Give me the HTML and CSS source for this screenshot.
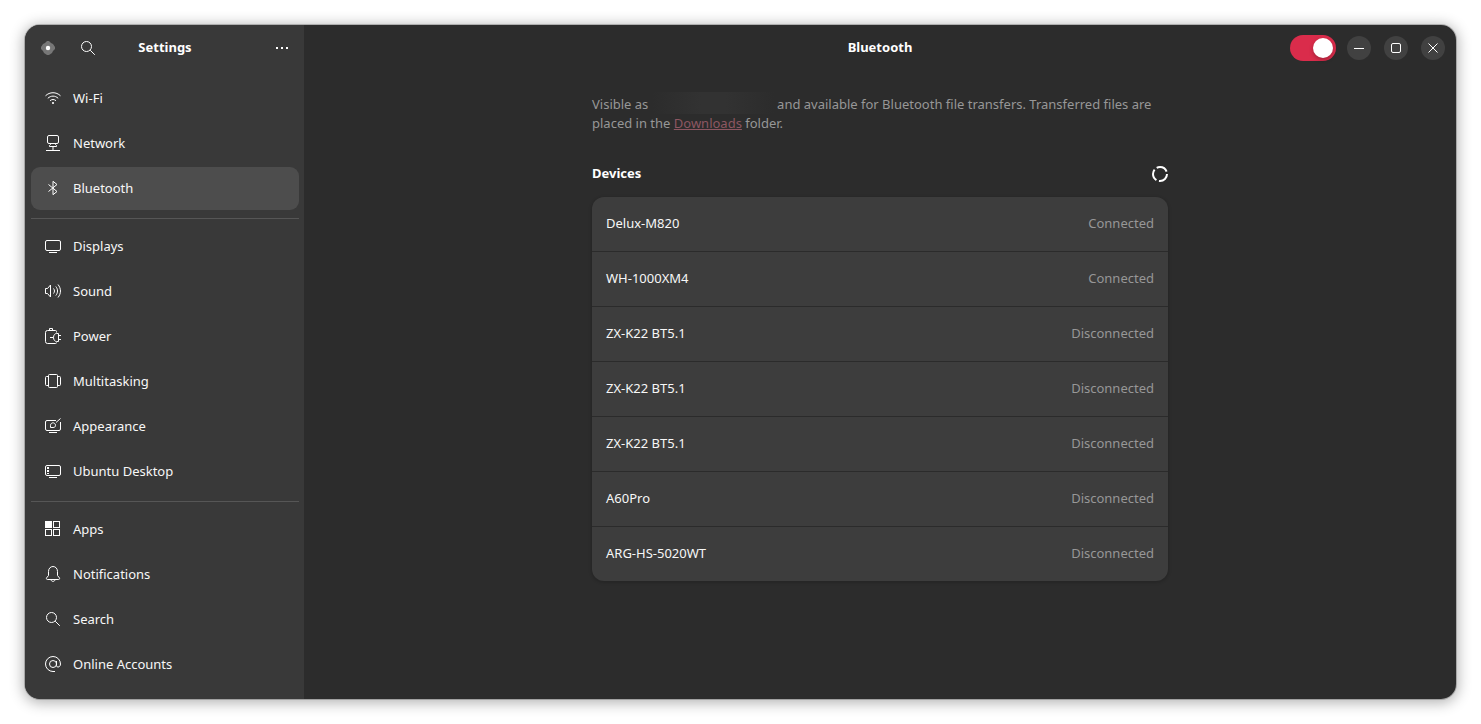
FILE: index.html
```html
<!DOCTYPE html>
<html lang="en">
<head>
  <meta charset="utf-8">
  <title>Settings - Bluetooth</title>
  <link rel="stylesheet" href="styles.css">
</head>
<body>
  <div class="window">
    <aside class="sidebar">
      <header class="sidebar-header">
        <div class="header-start">
          <svg class="icon" viewBox="0 0 16 16"><path d="M7 1h2l2 2 2 1 2 3v2l-2 2-1 2-3 2H7l-3-2-1-2-2-2V7l2-3 2-1z" fill="#777" stroke="none"/><circle cx="8" cy="8" r="2.2" fill="#fff" stroke="none"/></svg>
          <button class="icon-button" type="button" aria-label="Search settings">
            <svg class="icon" viewBox="0 0 16 16"><circle cx="6.5" cy="6.5" r="5"/><path d="M10.2 10.2l4.6 4.6"/></svg>
          </button>
        </div>
        <h1>Settings</h1>
        <div class="header-end">
          <button class="icon-button" type="button" aria-label="Menu">
            <svg class="icon" viewBox="0 0 16 16"><path d="M2 7h2v2H2zM7 7h2v2H7zM12 7h2v2h-2z" fill="#fff" stroke="none"/></svg>
          </button>
        </div>
      </header>

      <nav class="nav">
        <a class="nav-item" href="#wifi">
          <svg class="icon" viewBox="0 0 16 16"><path d="M.5 5.800C4.800 1.700 11.200 1.700 15.500 5.800M2.800 8.300C5.900 5.400 10.100 5.400 13.200 8.300M5 10.700C6.800 9.100 9.200 9.100 11 10.700"/><circle cx="8" cy="13" r="1.100" fill="#fff" stroke="none"/></svg>
          <span>Wi-Fi</span>
        </a>
        <a class="nav-item" href="#network">
          <svg class="icon" viewBox="0 0 16 16"><rect x="2.5" y=".5" width="11" height="8" rx="1.5"/><path d="M5.5 8.5v1l-1 1v1h7v-1l-1-1v-1M8 11.5v4M1 15.500h14"/></svg>
          <span>Network</span>
        </a>
        <a class="nav-item active" href="#bluetooth">
          <svg class="icon" viewBox="0 0 16 16"><path d="M3.500 4.500l8.500 7-4 3.200V1.300l4 3.200-8.500 7"/></svg>
          <span>Bluetooth</span>
        </a>
        <hr>
        <a class="nav-item" href="#displays">
          <svg class="icon" viewBox="0 0 16 16"><rect x=".5" y="2.5" width="15" height="10" rx="1.5"/><path d="M4 14.500h8"/></svg>
          <span>Displays</span>
        </a>
        <a class="nav-item" href="#sound">
          <svg class="icon" viewBox="0 0 16 16"><path d="M.5 5.500h2l3-3.500v12l-3-3.500h-2zM8.500 5.500c1.300 1.500 1.300 3.500 0 5M10.800 3.500c2.300 2.800 2.300 6.200 0 9M13 1.500c3.300 4 3.300 9 0 13"/></svg>
          <span>Sound</span>
        </a>
        <a class="nav-item" href="#power">
          <svg class="icon" viewBox="0 0 16 16"><path d="M11.500 4.500v-1a1 1 0 0 0-1-1h-8a2 2 0 0 0-2 2v9a2 2 0 0 0 2 2h8a1 1 0 0 0 1-1M4.500 2.500v-2h3v2M5 9.500h3.500M13.500 5.500h-2c-1.500 0-3 1.500-3 4s1.500 4 3 4h2zM13.500 7.500H16M13.500 11.500H16"/></svg>
          <span>Power</span>
        </a>
        <a class="nav-item" href="#multitasking">
          <svg class="icon" viewBox="0 0 16 16"><rect x="3.5" y="1.5" width="9" height="13" rx="1"/><path d="M3.500 3.500h-2a1 1 0 0 0-1 1v7a1 1 0 0 0 1 1h2M12.500 3.500h2a1 1 0 0 1 1 1v7a1 1 0 0 1-1 1h-2"/></svg>
          <span>Multitasking</span>
        </a>
        <a class="nav-item" href="#appearance">
          <svg class="icon" viewBox="0 0 16 16"><path d="M11 2.500H2A1.500 1.500 0 0 0 .5 4v7A1.500 1.500 0 0 0 2 12.500h12a1.500 1.500 0 0 0 1.500-1.500V4M4 14.500h8M15.500.5l-4.500 4M5.500 9.500V7.300C5.500 5.500 7 4.800 8 4.800s2.500.7 2.500 2.500-1.200 2.200-2.500 2.200z"/></svg>
          <span>Appearance</span>
        </a>
        <a class="nav-item" href="#desktop">
          <svg class="icon" viewBox="0 0 16 16"><rect x=".5" y="2.5" width="15" height="10" rx="1.5"/><path d="M4 14.500h8"/><path d="M2 4h2v2H2zM2 7h2v2H2zM2 10h2v1H2z" fill="#fff" stroke="none"/></svg>
          <span>Ubuntu Desktop</span>
        </a>
        <hr>
        <a class="nav-item" href="#apps">
          <svg class="icon" viewBox="0 0 16 16"><rect x=".5" y=".5" width="6" height="6" fill="#fff"/><rect x="8.5" y=".5" width="6" height="6"/><rect x=".5" y="8.5" width="6" height="6"/><rect x="8.5" y="8.5" width="6" height="6"/></svg>
          <span>Apps</span>
        </a>
        <a class="nav-item" href="#notifications">
          <svg class="icon" viewBox="0 0 16 16"><path d="M3.500 5.500c0-3 2-5 4.500-5s4.500 2 4.500 5v4l2 2.500c.3.700 0 1.500-.8 1.500H2.300c-.8 0-1.100-.8-.8-1.500l2-2.500zM6 13.500c0 2.500 4 2.500 4 0"/></svg>
          <span>Notifications</span>
        </a>
        <a class="nav-item" href="#search">
          <svg class="icon" viewBox="0 0 16 16"><circle cx="6.5" cy="6.5" r="5"/><path d="M10.200 10.200l4.600 4.600"/></svg>
          <span>Search</span>
        </a>
        <a class="nav-item" href="#accounts">
          <svg class="icon" viewBox="0 0 16 16"><circle cx="8" cy="8" r="3.5"/><path d="M11.500 5v4.500c0 2.500 4 2 4-1.500A7.500 7.500 0 1 0 8 15.500h2"/></svg>
          <span>Online Accounts</span>
        </a>
      </nav>
    </aside>

    <main class="content">
      <header class="content-header">
        <h2>Bluetooth</h2>
        <div class="window-controls">
          <input class="switch" type="checkbox" role="switch" aria-label="Bluetooth" checked>
          <button class="round-button" type="button" aria-label="Minimize">
            <svg class="icon" viewBox="0 0 16 16"><path d="M3 8.500h10"/></svg>
          </button>
          <button class="round-button" type="button" aria-label="Maximize">
            <svg class="icon" viewBox="0 0 16 16"><rect x="3.5" y="3.5" width="9" height="9" rx="1.5"/></svg>
          </button>
          <button class="round-button" type="button" aria-label="Close">
            <svg class="icon" viewBox="0 0 16 16"><path d="M3.500 3.500l9 9M12.500 3.500l-9 9"/></svg>
          </button>
        </div>
      </header>

      <div class="page">
        <p class="description">Visible as <span class="device-name"></span> and available for Bluetooth file transfers. Transferred files are placed in the <a href="#downloads">Downloads</a> folder.</p>

        <div class="section-title">
          <h3>Devices</h3>
          <svg class="icon" viewBox="0 0 16 16"><circle class="spinner" cx="8" cy="8" r="7"/></svg>
        </div>

        <ul class="devices">
          <li><button type="button"><span>Delux-M820</span><span class="status">Connected</span></button></li>
          <li><button type="button"><span>WH-1000XM4</span><span class="status">Connected</span></button></li>
          <li><button type="button"><span>ZX-K22 BT5.1</span><span class="status">Disconnected</span></button></li>
          <li><button type="button"><span>ZX-K22 BT5.1</span><span class="status">Disconnected</span></button></li>
          <li><button type="button"><span>ZX-K22 BT5.1</span><span class="status">Disconnected</span></button></li>
          <li><button type="button"><span>A60Pro</span><span class="status">Disconnected</span></button></li>
          <li><button type="button"><span>ARG-HS-5020WT</span><span class="status">Disconnected</span></button></li>
        </ul>
      </div>
    </main>
  </div>
</body>
</html>
```
FILE: styles.css
```css
* {
  box-sizing: border-box;
}

body {
  margin: 0;
  padding: 25px;
  min-height: 100vh;
  display: flex;
  background-color: #ffffff;
  color: #f7f7f7;
  font-family: "Noto Sans", sans-serif;
  font-size: 13px;
  line-height: 19px;
}

button {
  border: none;
  padding: 0;
  background: none;
  color: inherit;
  font: inherit;
  cursor: pointer;
}

h1,
h2,
h3 {
  margin: 0;
  color: #ffffff;
  font-size: 13px;
  font-weight: bold;
}

.window {
  flex: 1;
  display: flex;
  background-color: #2c2c2c;
  border-radius: 15px;
  overflow: hidden;
  box-shadow: 0 0 0 1px rgba(0, 0, 0, 0.2), 0 2px 14px 2px rgba(0, 0, 0, 0.3);
}

.icon {
  display: block;
  flex: none;
  width: 16px;
  height: 16px;
  fill: none;
  stroke: #ffffff;
  stroke-width: 1;
}

/* Sidebar */
.sidebar {
  flex: none;
  width: 279px;
  background-color: #393939;
}

.sidebar-header {
  display: grid;
  grid-template-columns: 1fr auto 1fr;
  align-items: center;
  height: 45px;
  padding: 0 14px 0 15px;
}

.header-start {
  display: flex;
  align-items: center;
  gap: 24px;
}

.header-end {
  display: flex;
  justify-content: flex-end;
}

.nav {
  display: flex;
  flex-direction: column;
  gap: 2px;
  padding: 7px 5px 6px 6px;
}

.nav-item {
  display: flex;
  gap: 12px;
  padding: 13px 14px;
  border-radius: 9px;
  color: inherit;
  line-height: 17px;
  text-decoration: none;
}

.nav-item.active {
  background-color: #4d4d4d;
}

.nav hr {
  width: 100%;
  height: 1px;
  margin: 6px 0 4px;
  border: none;
  background-color: #565656;
}

/* Content */
.content {
  flex: 1;
}

.content-header {
  display: grid;
  grid-template-columns: 1fr auto 1fr;
  align-items: center;
  height: 45px;
  padding: 0 11px;
}

.content-header h2 {
  grid-column: 2;
}

.window-controls {
  display: flex;
  justify-content: flex-end;
  align-items: center;
  gap: 13px;
}

.switch {
  appearance: none;
  display: flex;
  width: 46px;
  height: 26px;
  margin: 0 -2px 0 0;
  padding: 3px;
  border-radius: 13px;
  background-color: #5a5a5a;
  cursor: pointer;
}

.switch::before {
  content: "";
  width: 20px;
  height: 20px;
  border-radius: 50%;
  background-color: #ffffff;
  box-shadow: 0 2px 4px rgba(0, 0, 0, 0.25);
}

.switch:checked {
  justify-content: flex-end;
  background-color: #da2c4b;
}

.round-button {
  width: 24px;
  height: 24px;
  padding: 4px;
  border-radius: 50%;
  background-color: #414141;
}

.page {
  max-width: 576px;
  margin: 0 auto;
  padding: 25px 0 24px;
}

.description {
  margin: 0;
  color: #979797;
}

.description a {
  color: #8d5762;
}

.device-name {
  display: inline-block;
  width: 122px;
  height: 22px;
  margin-top: -3px;
  vertical-align: bottom;
  background: linear-gradient(90deg, #2c2c2c, #323232 40%, #323232 60%, #2c2c2c);
}

.section-title {
  display: flex;
  justify-content: space-between;
  align-items: center;
  margin: 31px 0 14px;
}

.spinner {
  stroke-width: 2;
  stroke-dasharray: 12 2.66;
}

.devices {
  margin: 0;
  padding: 0;
  list-style: none;
  border-radius: 12px;
  overflow: hidden;
  background-color: #3d3d3d;
  box-shadow: 0 1px 3px 1px rgba(0, 0, 0, 0.15);
}

.devices li + li {
  border-top: 1px solid #2b2b2b;
}

.devices button {
  display: flex;
  justify-content: space-between;
  align-items: center;
  width: 100%;
  height: 54px;
  padding: 0 14px 2px;
}

.status {
  color: #979797;
}
```
